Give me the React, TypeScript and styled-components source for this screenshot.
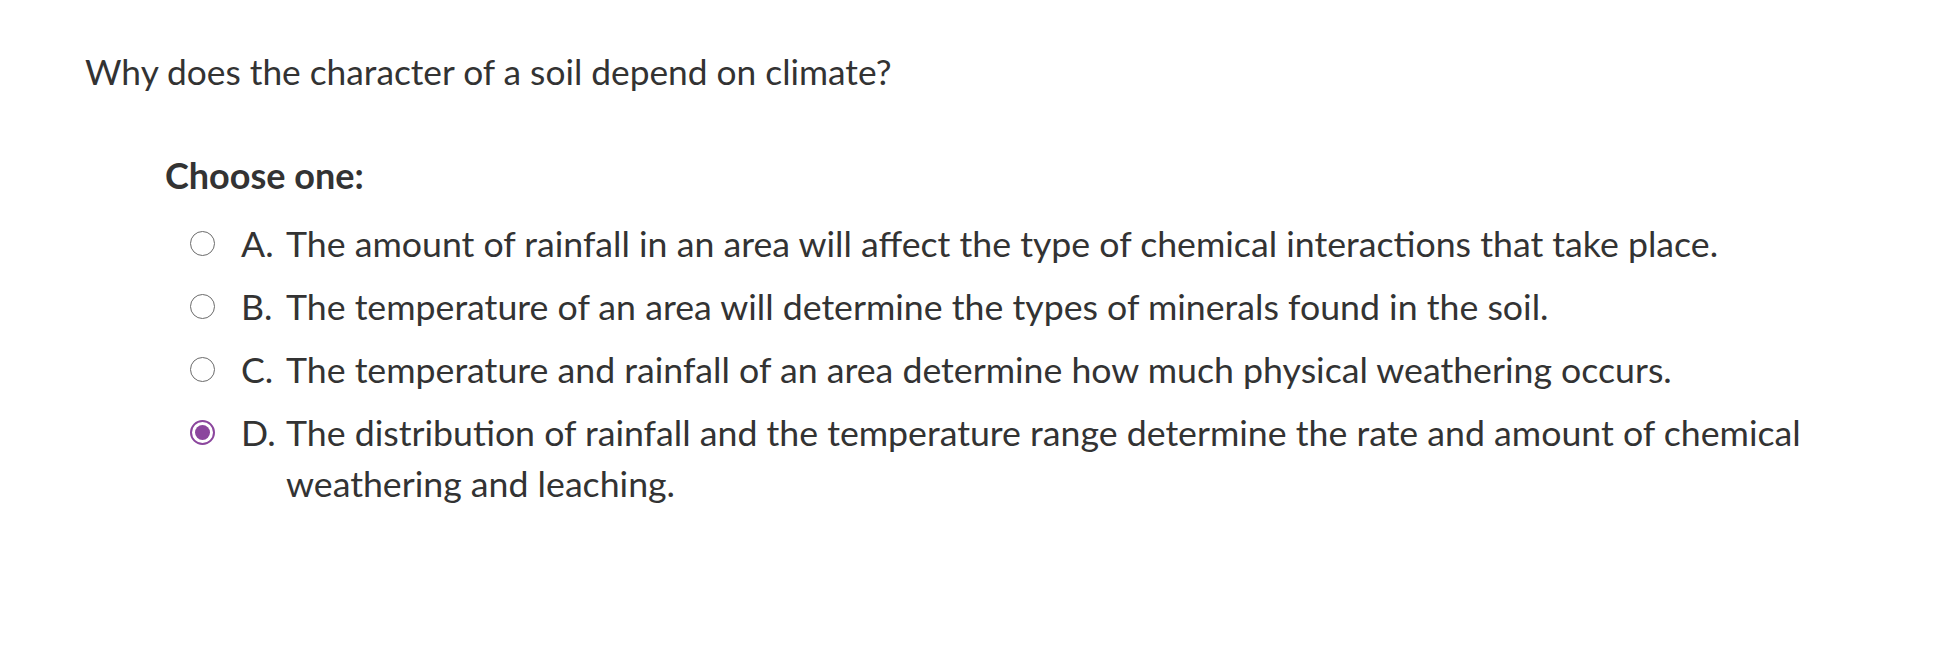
import React, { useState } from "react";
import styled, { createGlobalStyle } from "styled-components";

const Global = createGlobalStyle`
  html, body { margin: 0; padding: 0; background: #ffffff; }
  body { font-family: Lato, "Noto Sans", "Liberation Sans", sans-serif; color: #333333; }
`;

const Page = styled.div`
  padding: 51px 0 0 85px;
`;

const Question = styled.div`
  font-size: 35.3px;
  line-height: 42px;
  color: #333333;
`;

const Answer = styled.div`
  margin-top: 61px;
  padding-left: 80px;
`;

const Prompt = styled.div`
  font-size: 36px;
  line-height: 42px;
  font-weight: 700;
  color: #333333;
`;

const Options = styled.div`
  margin-top: 22px;
  padding-left: 25px;
  display: flex;
  flex-direction: column;
  gap: 12px;
`;

const Option = styled.label`
  display: flex;
  align-items: flex-start;
  cursor: pointer;
  font-size: 35.7px;
  line-height: 51px;
  color: #333333;
`;

const RadioWrap = styled.span`
  flex: none;
  width: 51px;
  height: 51px;
  display: flex;
  align-items: center;
`;

const Radio = styled.span<{ $checked: boolean }>`
  box-sizing: border-box;
  width: 25px;
  height: 25px;
  border-radius: 50%;
  border: ${(p) => (p.$checked ? "2.5px solid #8b469d" : "1.6px solid #6b6b6b")};
  background: #ffffff;
  display: flex;
  align-items: center;
  justify-content: center;
  &::after {
    content: "";
    display: ${(p) => (p.$checked ? "block" : "none")};
    width: 15px;
    height: 15px;
    border-radius: 50%;
    background: #8b469d;
  }
`;

const Letter = styled.span`
  flex: none;
  width: 45px;
`;

const Text = styled.span`
  flex: 1;
  max-width: 1560px;
`;

const options = [
  { key: "A", text: "The amount of rainfall in an area will affect the type of chemical interactions that take place." },
  { key: "B", text: "The temperature of an area will determine the types of minerals found in the soil." },
  { key: "C", text: "The temperature and rainfall of an area determine how much physical weathering occurs." },
  { key: "D", text: "The distribution of rainfall and the temperature range determine the rate and amount of chemical weathering and leaching." },
];

export default function App() {
  const [selected, setSelected] = useState("D");
  return (
    <Page>
      <Global />
      <Question>Why does the character of a soil depend on climate?</Question>
      <Answer>
        <Prompt>Choose one:</Prompt>
        <Options>
          {options.map((o) => (
            <Option key={o.key} onClick={() => setSelected(o.key)}>
              <RadioWrap>
                <Radio $checked={selected === o.key} />
              </RadioWrap>
              <Letter>{o.key}.</Letter>
              <Text>{o.text}</Text>
            </Option>
          ))}
        </Options>
      </Answer>
    </Page>
  );
}
